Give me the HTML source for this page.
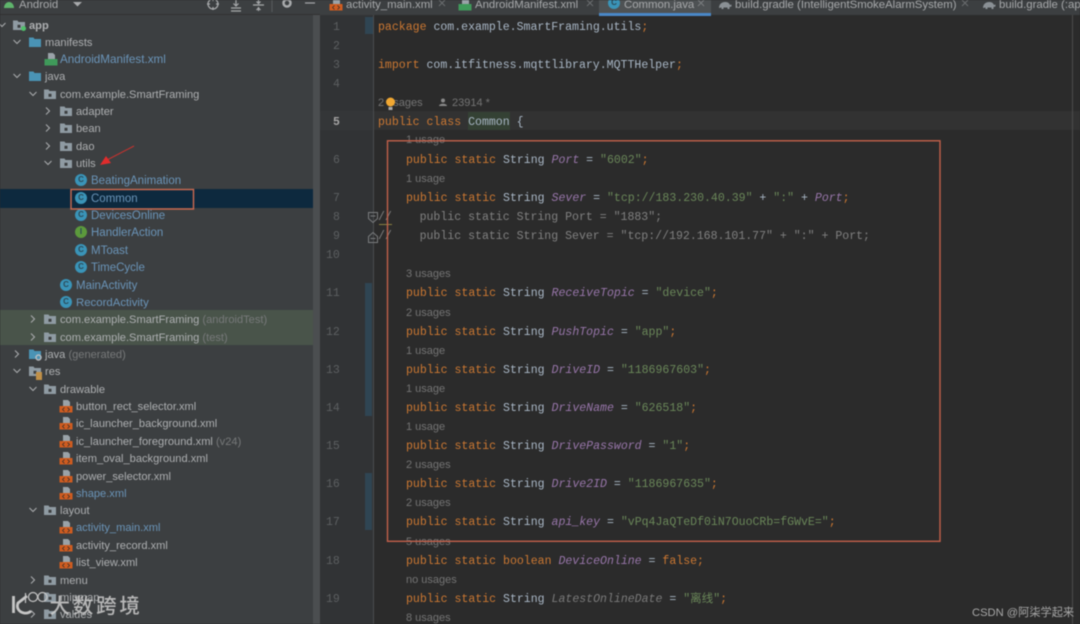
<!DOCTYPE html>
<html><head><meta charset="utf-8"><style>
html,body{margin:0;padding:0;background:#2b2b2b}
#p{position:relative;width:1080px;height:624px;overflow:hidden;background:#2b2b2b;filter:blur(.45px)}
.a{position:absolute}
.r,.c,.u,.n{position:absolute;white-space:pre;line-height:18px;height:18px;margin-top:1px}
.c,.n{margin-top:2px}
.r{font:11.1px/18px "Liberation Sans",sans-serif;color:#adafb1}
.b{color:#6a94b8}.g{color:#77797a}
.r.b{font-size:11.5px}
.r.h{font-size:11.1px}
.c{font:11.55px/18px "Liberation Mono",monospace;color:#a9b7c6;left:406px}
.u{font:11px/18px "Liberation Sans",sans-serif;color:#747474;left:406px}
.n{font:11.5px/18px "Liberation Mono",monospace;color:#5c5f61;left:333px;width:14px}
i{font-style:italic;color:#9876aa}.e{font-style:italic;color:#7a7a7a}
b{font-weight:normal;color:#cc7832}s{text-decoration:none;color:#6a8759}
svg.i{position:absolute;width:14px;height:14px}
.k{position:absolute;width:12px;height:12px;border-radius:50%;background:#3a94b8;color:#2b4a58;font:bold 8px/12px "Liberation Sans",sans-serif;text-align:center}
.t{position:absolute;font:11.4px/15px "Liberation Sans",sans-serif;top:-2px;white-space:pre;color:#a6a8aa}
</style></head><body><div id="p">
<svg width="0" height="0" style="position:absolute"><defs>
<symbol id="f" viewBox="0 0 14 14"><path d="M1 2.500h4.500l1 1.500h6.500v8h-12z" fill="#8f9ba3"/><rect x="5.500" y="6.800" width="3" height="3" fill="#3c3f41"/></symbol>
<symbol id="F" viewBox="0 0 14 14"><path d="M1 2.500h4.500l1 1.500h6.500v8h-12z" fill="#4a93b5"/></symbol>
<symbol id="x" viewBox="0 0 14 14"><path d="M4 1h5l2 2v4h-7z" fill="#9aa2a8"/><path d="M.5 7h13v6.500h-13z" fill="#cf5c20"/><path d="M5.500 8.500l-2 2 2 2M8.500 8.500l2 2-2 2" fill="none" stroke="#3a2f2a" stroke-width=".8"/></symbol>
<symbol id="m" viewBox="0 0 14 14"><path d="M4 1h5l2 2v4h-7z" fill="#9aa2a8"/><path d="M.5 7h13v6.500h-13z" fill="#3f9a5a"/></symbol>
<symbol id="d" viewBox="0 0 10 10"><path d="M1.500 3l3.500 3.500 3.500-3.500" fill="none" stroke="#a8aaac" stroke-width="1.100"/></symbol>
<symbol id="v" viewBox="0 0 10 10"><path d="M3 1.500l3.500 3.500-3.500 3.500" fill="none" stroke="#a8aaac" stroke-width="1.100"/></symbol>
<symbol id="t" viewBox="0 0 14 10"><path d="M1 8c0-4 3-6 6-6s4 1 5 3l1.500-.5v2l-2 .5v2h-2v-1.500h-4v1.500h-2v-1.500z" fill="#8a9095"/></symbol>
</defs></svg>

<!-- project panel -->
<div class="a" style="left:0;top:0;width:320px;height:624px;background:#3c3f41"></div>
<div class="a" style="left:0;top:14px;width:320px;height:1px;background:#323232"></div>
<div class="a" style="left:313px;top:15px;width:7px;height:609px;background:#4b4e50"></div>
<div class="a" style="left:0;top:189px;width:313px;height:19px;background:#0d293e"></div>
<div class="a" style="left:0;top:310px;width:313px;height:35px;background:#49544a"></div>

<!-- header -->
<svg class="a" style="left:3px;top:0" width="12" height="8"><path d="M1 8c0-3 2-6 5-6s5 3 5 6z" fill="#5fb56c"/></svg>
<div class="t" style="left:19px">Android</div>
<svg class="a" style="left:72px;top:1px" width="11" height="6"><path d="M1 1h9l-4.500 4.500z" fill="#a8aaac"/></svg>
<svg class="a" style="left:205px;top:0" width="115" height="13" fill="none" stroke="#a8aaac" stroke-width="1.200">
<circle cx="8" cy="4" r="5"/><path d="M8-2v3M8 7v3M2 4h3M11 4h3"/>
<path d="M26 11h10M26 8h10M31 0v6M28.500 3.500l2.500 2.500 2.500-2.500"/>
<path d="M48 5h11M53.500 0v3M53.500 7v4M51.500 1.500l2 2 2-2M51.500 10l2-2 2 2"/>
<path d="M67-2v14" stroke="#55585a"/>
<circle cx="82" cy="3" r="3.500" stroke-width="2.500"/>
<path d="M100 3h10"/></svg>

<!-- tree chevrons -->
<svg class="a" style="left:-3px;top:20px;width:10px;height:10px"><use href="#d"/></svg>
<svg class="a" style="left:12px;top:37px;width:10px;height:10px"><use href="#d"/></svg>
<svg class="a" style="left:12px;top:71px;width:10px;height:10px"><use href="#d"/></svg>
<svg class="a" style="left:28px;top:89px;width:10px;height:10px"><use href="#d"/></svg>
<svg class="a" style="left:43px;top:106px;width:10px;height:10px"><use href="#v"/></svg>
<svg class="a" style="left:43px;top:123px;width:10px;height:10px"><use href="#v"/></svg>
<svg class="a" style="left:43px;top:141px;width:10px;height:10px"><use href="#v"/></svg>
<svg class="a" style="left:43px;top:158px;width:10px;height:10px"><use href="#d"/></svg>
<svg class="a" style="left:28px;top:314px;width:10px;height:10px"><use href="#v"/></svg>
<svg class="a" style="left:28px;top:332px;width:10px;height:10px"><use href="#v"/></svg>
<svg class="a" style="left:12px;top:349px;width:10px;height:10px"><use href="#v"/></svg>
<svg class="a" style="left:12px;top:366px;width:10px;height:10px"><use href="#d"/></svg>
<svg class="a" style="left:28px;top:384px;width:10px;height:10px"><use href="#d"/></svg>
<svg class="a" style="left:28px;top:505px;width:10px;height:10px"><use href="#d"/></svg>
<svg class="a" style="left:28px;top:575px;width:10px;height:10px"><use href="#v"/></svg>
<svg class="a" style="left:28px;top:609px;width:10px;height:10px"><use href="#v"/></svg>

<!-- tree icons -->
<svg class="i" style="left:12px;top:18px"><use href="#f"/></svg>
<div class="a" style="left:21px;top:26px;width:5px;height:5px;border-radius:50%;background:#4fc06a"></div>
<svg class="i" style="left:28px;top:35px"><use href="#F"/></svg>
<svg class="i" style="left:44px;top:52px"><use href="#m"/></svg>
<svg class="i" style="left:28px;top:69px"><use href="#F"/></svg>
<svg class="i" style="left:43px;top:87px"><use href="#f"/></svg>
<svg class="i" style="left:59px;top:104px"><use href="#f"/></svg>
<svg class="i" style="left:59px;top:121px"><use href="#f"/></svg>
<svg class="i" style="left:59px;top:139px"><use href="#f"/></svg>
<svg class="i" style="left:59px;top:156px"><use href="#f"/></svg>
<div class="k" style="left:75px;top:174px">C</div>
<div class="k" style="left:75px;top:192px">C</div>
<div class="k" style="left:75px;top:209px">C</div>
<div class="k" style="left:75px;top:226px;background:#5c9a3c">I</div>
<div class="k" style="left:75px;top:244px">C</div>
<div class="k" style="left:75px;top:261px">C</div>
<div class="k" style="left:60px;top:279px">C</div>
<div class="k" style="left:60px;top:296px">C</div>
<svg class="i" style="left:43px;top:312px"><use href="#f"/></svg>
<svg class="i" style="left:43px;top:330px"><use href="#f"/></svg>
<svg class="i" style="left:28px;top:347px"><use href="#F"/></svg>
<svg class="a" style="left:34px;top:353px" width="9" height="9"><circle cx="4.500" cy="4.500" r="2.500" fill="none" stroke="#b8bcc0" stroke-width="1.500"/></svg>
<svg class="i" style="left:28px;top:364px"><use href="#f"/></svg>
<div class="a" style="left:36px;top:372px;width:6px;height:8px;background:#c09048"></div>
<svg class="i" style="left:43px;top:382px"><use href="#f"/></svg>
<svg class="i" style="left:59px;top:399px"><use href="#x"/></svg>
<svg class="i" style="left:59px;top:416px"><use href="#x"/></svg>
<svg class="i" style="left:59px;top:434px"><use href="#x"/></svg>
<svg class="i" style="left:59px;top:451px"><use href="#x"/></svg>
<svg class="i" style="left:59px;top:469px"><use href="#x"/></svg>
<svg class="i" style="left:59px;top:486px"><use href="#x"/></svg>
<svg class="i" style="left:43px;top:503px"><use href="#f"/></svg>
<svg class="i" style="left:59px;top:520px"><use href="#x"/></svg>
<svg class="i" style="left:59px;top:538px"><use href="#x"/></svg>
<svg class="i" style="left:59px;top:555px"><use href="#x"/></svg>
<svg class="i" style="left:43px;top:573px"><use href="#f"/></svg>
<svg class="i" style="left:43px;top:590px"><use href="#f"/></svg>
<svg class="i" style="left:43px;top:607px"><use href="#f"/></svg>

<!-- tree text -->
<div class="r" style="left:29px;top:16px;font-weight:bold">app</div>
<div class="r" style="left:45px;top:33px">manifests</div>
<div class="r b" style="left:60px;top:50px;font-size:11.7px">AndroidManifest.xml</div>
<div class="r" style="left:45px;top:67px">java</div>
<div class="r" style="left:60px;top:85px">com.example.SmartFraming</div>
<div class="r" style="left:76px;top:102px">adapter</div>
<div class="r" style="left:76px;top:119px">bean</div>
<div class="r" style="left:76px;top:137px">dao</div>
<div class="r" style="left:76px;top:154px">utils</div>
<div class="r b" style="left:91px;top:171px">BeatingAnimation</div>
<div class="r b" style="left:91px;top:189px">Common</div>
<div class="r b" style="left:91px;top:206px">DevicesOnline</div>
<div class="r b" style="left:91px;top:223px">HandlerAction</div>
<div class="r b" style="left:91px;top:241px">MToast</div>
<div class="r b" style="left:91px;top:258px">TimeCycle</div>
<div class="r b" style="left:76px;top:276px">MainActivity</div>
<div class="r b h" style="left:76px;top:293px;font-size:11.4px">RecordActivity</div>
<div class="r" style="left:60px;top:310px">com.example.SmartFraming <span class="g">(androidTest)</span></div>
<div class="r" style="left:60px;top:328px">com.example.SmartFraming <span class="g">(test)</span></div>
<div class="r" style="left:45px;top:345px">java <span class="g">(generated)</span></div>
<div class="r" style="left:45px;top:362px">res</div>
<div class="r" style="left:60px;top:380px">drawable</div>
<div class="r" style="left:76px;top:397px">button_rect_selector.xml</div>
<div class="r" style="left:76px;top:414px">ic_launcher_background.xml</div>
<div class="r" style="left:76px;top:432px">ic_launcher_foreground.xml <span class="g">(v24)</span></div>
<div class="r" style="left:76px;top:449px">item_oval_background.xml</div>
<div class="r" style="left:76px;top:467px">power_selector.xml</div>
<div class="r b h" style="left:76px;top:484px">shape.xml</div>
<div class="r" style="left:60px;top:501px">layout</div>
<div class="r b h" style="left:76px;top:518px">activity_main.xml</div>
<div class="r" style="left:76px;top:536px">activity_record.xml</div>
<div class="r" style="left:76px;top:553px">list_view.xml</div>
<div class="r" style="left:60px;top:571px">menu</div>
<div class="r" style="left:60px;top:588px">mipmap</div>
<div class="r" style="left:60px;top:605px">values</div>

<!-- annotations left -->
<svg class="a" style="left:70px;top:188px" width="125" height="23"><rect x="1" y="1.500" width="122.500" height="19.500" fill="none" stroke="#cc6a50" stroke-width="1.400"/></svg>
<svg class="a" style="left:95px;top:140px" width="45" height="30"><path d="M39 6L12 20" stroke="#c8322e" stroke-width="1"/><path d="M5 25l6-9 5 7z" fill="#e02c2c"/></svg>

<!-- watermark -->
<svg class="a" style="left:8px;top:588px" width="44" height="30" fill="none" stroke="#c6c6c6"><path d="M5.500 8v17" stroke-width="2.800"/><path d="M19 8L10 15c-2 5 1 9 6 10 3 .5 5 0 7-2" stroke-width="2.800"/><path d="M17.500 5v10" stroke-width="1.200"/><circle cx="25" cy="9" r="4.500" stroke-width="1.200"/><circle cx="34.500" cy="9" r="4.500" stroke-width="1.200"/></svg>
<div class="a" style="left:49.500px;top:590px;font:500 20.500px/28px 'Noto Sans CJK SC',sans-serif;color:rgba(205,205,205,.85);white-space:pre;letter-spacing:2.800px">大数跨境</div>

<!-- editor -->
<div class="a" style="left:320px;top:15px;width:53px;height:609px;background:#313335"></div>
<div class="a" style="left:373px;top:15px;width:1px;height:609px;background:#4a4c4e"></div>
<div class="a" style="left:374px;top:111px;width:706px;height:19px;background:#323232"></div>
<div class="a" style="left:320px;top:111px;width:53px;height:19px;background:#343638"></div>
<div class="a" style="left:1072px;top:15px;width:1px;height:609px;background:#4c4c4c"></div>
<div class="a" style="left:365px;top:17px;width:8px;height:17px;background:#2f4553"></div>
<div class="a" style="left:365px;top:283px;width:7px;height:133px;background:#2f4553"></div>
<div class="a" style="left:365px;top:473px;width:7px;height:57px;background:#2f4553"></div>
<div class="a" style="left:468px;top:112px;width:42px;height:18px;background:#344134"></div>

<!-- tabs -->
<div class="a" style="left:320px;top:0;width:760px;height:15px;background:#3c3f41"></div>
<div class="a" style="left:599px;top:0;width:112px;height:13px;background:#4e5254"></div>
<div class="a" style="left:599px;top:13px;width:112px;height:3px;background:#4a88c7"></div>
<svg class="i" style="left:329px;top:-3px"><use href="#x"/></svg>
<svg class="i" style="left:458px;top:-3px"><use href="#m"/></svg>
<div class="k" style="left:608px;top:-3px">C</div>
<svg class="a" style="left:718px;top:0;width:14px;height:10px"><use href="#t"/></svg>
<svg class="a" style="left:982px;top:0;width:14px;height:10px"><use href="#t"/></svg>
<div class="t b" style="left:346px">activity_main.xml</div>
<div class="t b" style="left:475px">AndroidManifest.xml</div>
<div class="t b" style="left:624px">Common.java</div>
<div class="t" style="left:735px">build.gradle (IntelligentSmokeAlarmSystem)</div>
<div class="t b" style="left:999px">build.gradle (:ap</div>
<svg class="a" style="left:438px;top:0" width="8" height="8"><path d="M1 0l6 6M7 0l-6 6" stroke="#6a6d6f"/></svg>
<svg class="a" style="left:586px;top:0" width="8" height="8"><path d="M1 0l6 6M7 0l-6 6" stroke="#6a6d6f"/></svg>
<svg class="a" style="left:697px;top:0" width="8" height="8"><path d="M1 0l6 6M7 0l-6 6" stroke="#7a7d7f"/></svg>
<svg class="a" style="left:961px;top:0" width="8" height="8"><path d="M1 0l6 6M7 0l-6 6" stroke="#6a6d6f"/></svg>

<!-- line numbers -->
<div class="n" style="top:17px">1</div><div class="n" style="top:36px">2</div><div class="n" style="top:55px">3</div><div class="n" style="top:74px">4</div>
<div class="n" style="top:112px;color:#a4a3a3;font-weight:bold">5</div><div class="n" style="top:150px">6</div><div class="n" style="top:188px">7</div><div class="n" style="top:207px">8</div><div class="n" style="top:226px">9</div>
<div class="n" style="top:245px;left:326px">10</div><div class="n" style="top:283px;left:326px">11</div><div class="n" style="top:322px;left:326px">12</div><div class="n" style="top:360px;left:326px">13</div><div class="n" style="top:398px;left:326px">14</div><div class="n" style="top:436px;left:326px">15</div><div class="n" style="top:474px;left:326px">16</div><div class="n" style="top:512px;left:326px">17</div><div class="n" style="top:551px;left:326px">18</div><div class="n" style="top:589px;left:326px">19</div>

<!-- code -->
<div class="c" style="left:378px;top:17px"><b>package</b> com.example.SmartFraming.utils<b>;</b></div>
<div class="c" style="left:378px;top:55px"><b>import</b> com.itfitness.mqttlibrary.MQTTHelper<b>;</b></div>
<div class="u" style="left:378px;top:93px">2 usages</div>
<div class="u" style="left:452px;top:93px">23914 *</div>
<svg class="a" style="left:439px;top:98px" width="10" height="9"><circle cx="4" cy="2.500" r="2" fill="#8a8a8a"/><path d="M0 8c0-3 8-3 8 0z" fill="#8a8a8a"/></svg>
<svg class="a" style="left:385px;top:97px" width="11" height="14"><circle cx="5.500" cy="5" r="4.500" fill="#f0a732"/><rect x="3.500" y="10" width="4" height="3" fill="#a8a8a8"/></svg>
<div class="c" style="left:378px;top:112px"><b>public class</b> Common {</div>
<div class="u" style="top:130px">1 usage</div>
<div class="c" style="top:150px"><b>public static</b> String <i>Port</i> = <s>"6002"</s><b>;</b></div>
<div class="u" style="top:169px">1 usage</div>
<div class="c" style="top:188px"><b>public static</b> String <i>Sever</i> = <s>"tcp://183.230.40.39"</s> + <s>":"</s> + <i>Port</i><b>;</b></div>
<div class="c" style="left:378px;top:207px;color:#808080">//    public static String Port = "1883";</div>
<div class="c" style="left:378px;top:226px;color:#808080">//    public static String Sever = "tcp://192.168.101.77" + ":" + Port;</div>
<svg class="a" style="left:368px;top:212px" width="12" height="32" fill="none" stroke="#7a7c7e"><path d="M.5.500h9v6l-4.500 4-4.500-4zM2.500 4h5"/><path d="M.5 30.500h9v-6l-4.500-4-4.500 4zM2.500 26.500h5"/></svg>
<div class="a" style="left:379px;top:224px;width:13px;height:1px;background:#8a8040"></div>
<div class="u" style="top:264px">3 usages</div>
<div class="c" style="top:283px"><b>public static</b> String <i>ReceiveTopic</i> = <s>"device"</s><b>;</b></div>
<div class="u" style="top:303px">2 usages</div>
<div class="c" style="top:322px"><b>public static</b> String <i>PushTopic</i> = <s>"app"</s><b>;</b></div>
<div class="u" style="top:341px">1 usage</div>
<div class="c" style="top:360px"><b>public static</b> String <i>DriveID</i> = <s>"1186967603"</s><b>;</b></div>
<div class="u" style="top:379px">1 usage</div>
<div class="c" style="top:398px"><b>public static</b> String <i>DriveName</i> = <s>"626518"</s><b>;</b></div>
<div class="u" style="top:417px">1 usage</div>
<div class="c" style="top:436px"><b>public static</b> String <i>DrivePassword</i> = <s>"1"</s><b>;</b></div>
<div class="u" style="top:455px">2 usages</div>
<div class="c" style="top:474px"><b>public static</b> String <i>Drive2ID</i> = <s>"1186967635"</s><b>;</b></div>
<div class="u" style="top:493px">2 usages</div>
<div class="c" style="top:512px"><b>public static</b> String <i>api_key</i> = <s>"vPq4JaQTeDf0iN7OuoCRb=fGWvE="</s><b>;</b></div>
<div class="u" style="top:532px">5 usages</div>
<div class="c" style="top:551px"><b>public static boolean</b> <i>DeviceOnline</i> = <b>false;</b></div>
<div class="u" style="top:570px">no usages</div>
<div class="c" style="top:589px"><b>public static</b> String <span class="e">LatestOnlineDate</span> = <s style="font-family:'Liberation Mono','Noto Sans CJK SC',monospace">"离线"</s><b>;</b></div>
<div class="u" style="top:608px">8 usages</div>

<!-- annotation box -->
<svg class="a" style="left:385px;top:138px" width="558" height="406"><rect x="2.500" y="2.800" width="552.500" height="400.500" fill="none" stroke="#c2604a" stroke-width="1.400"/></svg>
<div class="a" style="left:972px;top:604px;font:11.200px/18px 'Liberation Sans','Noto Sans CJK SC',sans-serif;color:#a8a8a8;white-space:pre">CSDN @阿柒学起来</div>
</div></body></html>
